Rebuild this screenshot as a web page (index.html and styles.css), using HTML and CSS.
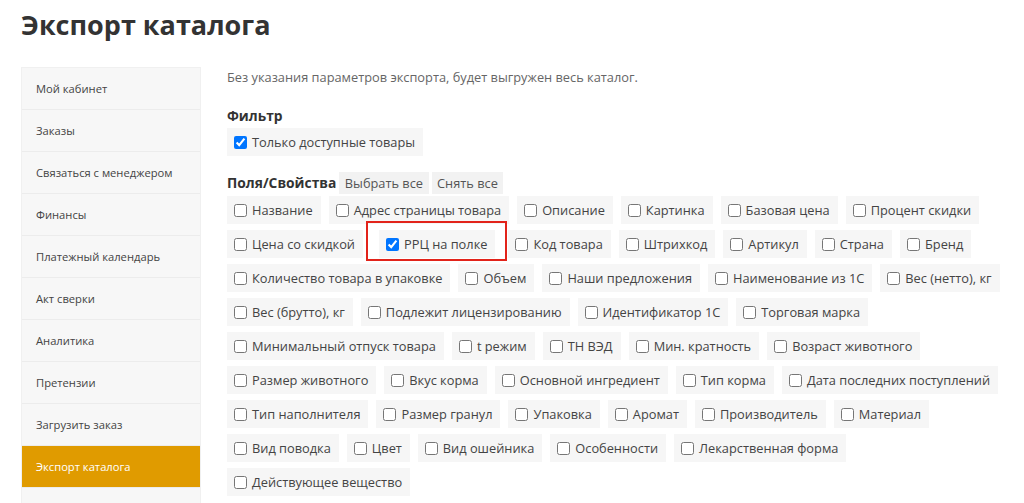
FILE: index.html
```html
<!DOCTYPE html>
<html lang="ru">
<head>
  <meta charset="UTF-8" />
  <meta name="viewport" content="width=device-width, initial-scale=1.0"/>
  <title>Экспорт каталога</title>
  <link rel="stylesheet" href="styles.css">
</head>
<body>

<div class="page">
  <h1>Экспорт каталога</h1>

  <div class="layout">
    <!-- Personal account menu -->
    <nav class="sidebar">
      <a href="#">Мой кабинет</a>
      <a href="#">Заказы</a>
      <a href="#">Связаться с менеджером</a>
      <a href="#">Финансы</a>
      <a href="#">Платежный календарь</a>
      <a href="#">Акт сверки</a>
      <a href="#">Аналитика</a>
      <a href="#">Претензии</a>
      <a href="#">Загрузить заказ</a>
      <a href="#" class="active">Экспорт каталога</a>
      <a href="#">Выйти</a>
    </nav>

    <!-- Export settings -->
    <main class="content">
      <p class="intro">Без указания параметров экспорта, будет выгружен весь каталог.</p>

      <h3>Фильтр</h3>
      <label class="opt"><input type="checkbox" checked>Только доступные товары</label>

      <div class="fields-head">
        <h3>Поля/Свойства</h3>
        <button type="button">Выбрать все</button>
        <button type="button">Снять все</button>
      </div>

      <div class="fields">
        <label class="opt"><input type="checkbox">Название</label>
        <label class="opt"><input type="checkbox">Адрес страницы товара</label>
        <label class="opt"><input type="checkbox">Описание</label>
        <label class="opt"><input type="checkbox">Картинка</label>
        <label class="opt"><input type="checkbox">Базовая цена</label>
        <label class="opt"><input type="checkbox">Процент скидки</label>
        <label class="opt"><input type="checkbox">Цена со скидкой</label>
        <label class="opt marked"><input type="checkbox" checked>РРЦ на полке</label>
        <label class="opt"><input type="checkbox">Код товара</label>
        <label class="opt"><input type="checkbox">Штрихкод</label>
        <label class="opt"><input type="checkbox">Артикул</label>
        <label class="opt"><input type="checkbox">Страна</label>
        <label class="opt"><input type="checkbox">Бренд</label>
        <label class="opt"><input type="checkbox">Количество товара в упаковке</label>
        <label class="opt"><input type="checkbox">Объем</label>
        <label class="opt"><input type="checkbox">Наши предложения</label>
        <label class="opt"><input type="checkbox">Наименование из 1С</label>
        <label class="opt"><input type="checkbox">Вес (нетто), кг</label>
        <label class="opt"><input type="checkbox">Вес (брутто), кг</label>
        <label class="opt"><input type="checkbox">Подлежит лицензированию</label>
        <label class="opt"><input type="checkbox">Идентификатор 1С</label>
        <label class="opt"><input type="checkbox">Торговая марка</label>
        <label class="opt"><input type="checkbox">Минимальный отпуск товара</label>
        <label class="opt"><input type="checkbox">t режим</label>
        <label class="opt"><input type="checkbox">ТН ВЭД</label>
        <label class="opt"><input type="checkbox">Мин. кратность</label>
        <label class="opt"><input type="checkbox">Возраст животного</label>
        <label class="opt"><input type="checkbox">Размер животного</label>
        <label class="opt"><input type="checkbox">Вкус корма</label>
        <label class="opt"><input type="checkbox">Основной ингредиент</label>
        <label class="opt"><input type="checkbox">Тип корма</label>
        <label class="opt"><input type="checkbox">Дата последних поступлений</label>
        <label class="opt"><input type="checkbox">Тип наполнителя</label>
        <label class="opt"><input type="checkbox">Размер гранул</label>
        <label class="opt"><input type="checkbox">Упаковка</label>
        <label class="opt"><input type="checkbox">Аромат</label>
        <label class="opt"><input type="checkbox">Производитель</label>
        <label class="opt"><input type="checkbox">Материал</label>
        <label class="opt"><input type="checkbox">Вид поводка</label>
        <label class="opt"><input type="checkbox">Цвет</label>
        <label class="opt"><input type="checkbox">Вид ошейника</label>
        <label class="opt"><input type="checkbox">Особенности</label>
        <label class="opt"><input type="checkbox">Лекарственная форма</label>
        <label class="opt"><input type="checkbox">Действующее вещество</label>
      </div>
    </main>
  </div>
</div>

</body>
</html>
```

FILE: styles.css
```css
body {
  font-family: 'Open Sans', sans-serif;
  margin: 0;
  background: #fff;
  color: #333;
}

.page {
  padding: 0 8px 0 21px;
}

h1 {
  margin: 5px 0 0;
  font-size: 27px;
  line-height: 40px;
  font-weight: 700;
  color: #333;
}

.layout {
  display: flex;
  gap: 26px;
  margin-top: 22px;
}

/* sidebar menu */
.sidebar {
  box-sizing: border-box;
  flex: 0 0 180px;
  display: flex;
  flex-direction: column;
  background: #f7f7f7;
  border: 1px solid #f0f0f0;
  border-bottom: none;
  align-self: flex-start;
}

.sidebar a {
  display: flex;
  align-items: center;
  height: 41px;
  padding-left: 14px;
  border-bottom: 1px solid #ececec;
  font-size: 11.2px;
  color: #444;
  text-decoration: none;
}

.sidebar a.active {
  background: #e09b00;
  color: #fff;
}

/* main column */
.content {
  flex: 1;
  min-width: 0;
}

.intro {
  margin: 0;
  font-size: 12.8px;
  line-height: 20px;
  color: #666;
}

h3 {
  margin: 19px 0 2px;
  font-size: 13.8px;
  line-height: 20px;
  font-weight: 700;
  color: #333;
}

.opt {
  display: inline-flex;
  align-items: center;
  height: 28px;
  padding: 0 8px 0 7px;
  background: #f6f6f6;
  font-size: 12.8px;
  color: #444;
  cursor: pointer;
}

.opt input {
  width: 13px;
  height: 13px;
  margin: 0 5px 0 0;
}

.fields-head {
  display: flex;
  align-items: center;
  gap: 3px;
  margin-top: 16px;
}

.fields-head h3 {
  margin: 0;
}

.fields-head button {
  height: 22px;
  padding: 0 5.5px;
  border: none;
  background: #f2f2f2;
  font-family: inherit;
  font-size: 12.8px;
  color: #555;
  cursor: pointer;
}

.fields {
  display: flex;
  flex-wrap: wrap;
  gap: 6px 8px;
  margin-top: 2px;
}

/* field marked with a red frame */
.opt.marked {
  position: relative;
  margin: 0 5px 0 8px;
}

.opt.marked::after {
  content: "";
  position: absolute;
  top: -9px;
  bottom: -3px;
  left: -13px;
  right: -12px;
  border: 2px solid #e2231a;
  pointer-events: none;
}
```
